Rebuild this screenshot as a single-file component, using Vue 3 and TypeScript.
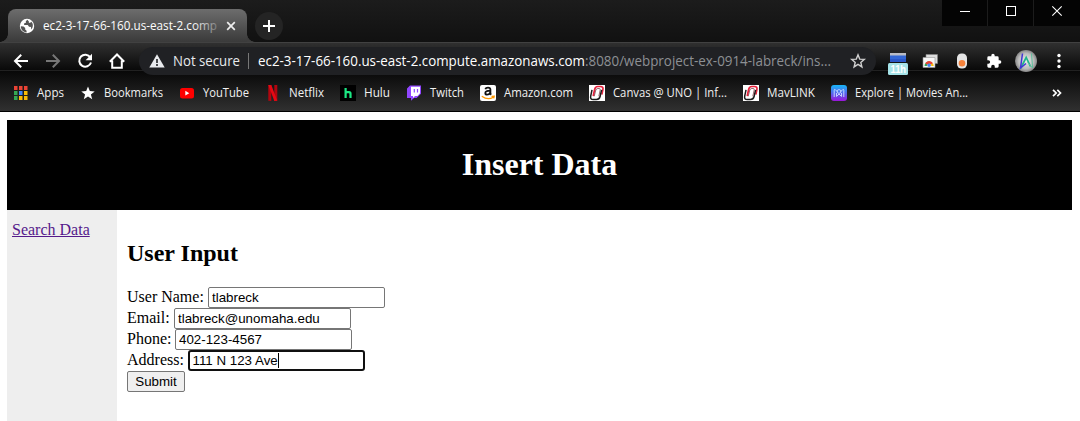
<script setup lang="ts">
import { reactive } from 'vue'

interface Bookmark {
  icon: string
  label: string
  width: number
}

const bookmarks: Bookmark[] = [
  { icon: 'apps', label: 'Apps', width: 27 },
  { icon: 'star', label: 'Bookmarks', width: 59 },
  { icon: 'youtube', label: 'YouTube', width: 46 },
  { icon: 'netflix', label: 'Netflix', width: 35 },
  { icon: 'hulu', label: 'Hulu', width: 26 },
  { icon: 'twitch', label: 'Twitch', width: 34 },
  { icon: 'amazon', label: 'Amazon.com', width: 69 },
  { icon: 'uno', label: 'Canvas @ UNO | Inf...', width: 114 },
  { icon: 'uno', label: 'MavLINK', width: 48 },
  { icon: 'movies', label: 'Explore | Movies An...', width: 113 },
]

const appColors = ['#ea4335', '#ea4335', '#ea4335', '#34a853', '#4285f4', '#fbbc05', '#34a853', '#fbbc05', '#fbbc05']

const form = reactive({
  user: 'tlabreck',
  email: 'tlabreck@unomaha.edu',
  phone: '402-123-4567',
  address: '111 N 123 Ave',
})
</script>

<template>
  <div class="window">
    <div class="titlebar">
      <div class="tab">
        <svg class="globe" width="16" height="16" viewBox="0 0 16 16">
          <circle cx="8" cy="8" r="7.2" fill="#fff" />
          <path d="M1.800 8.200 4.600 8.400 6.200 10v1.600l1.400 1.200v1.600C4.200 14.200 1.800 11.600 1.800 8.200zM8.300 1.800 6.800 3.200 6.900 4.800 5 5.600 5.200 7 8.800 7.100 10 8.800 12 9 12.200 11.500C14.600 9 14.300 5.500 12.200 3.800L11 5 9.700 4.600 9.900 3.400z" fill="#555" />
        </svg>
        <svg class="tab-title" width="175" height="20">
          <defs>
            <linearGradient id="fade" gradientUnits="userSpaceOnUse" x1="0" x2="174" y1="0" y2="0">
              <stop offset="0.86" stop-color="#fff" />
              <stop offset="1" stop-color="#fff" stop-opacity="0.25" />
            </linearGradient>
          </defs>
          <text x="0" y="14" textLength="174" lengthAdjust="spacingAndGlyphs" fill="url(#fade)">ec2-3-17-66-160.us-east-2.comp</text>
        </svg>
        <svg class="tab-close" width="10" height="10" viewBox="0 0 10 10"><path d="M1.200 1.200 8.800 8.800M8.800 1.200 1.200 8.800" stroke="#eee" stroke-width="1.700" /></svg>
      </div>
      <div class="new-tab">
        <svg width="12" height="12" viewBox="0 0 12 12"><path d="M6 0v12M0 6h12" stroke="#fff" stroke-width="2" /></svg>
      </div>
      <div class="controls">
        <div class="control"><svg width="10" height="10"><path d="M0 5.500h10" stroke="#fff" /></svg></div>
        <div class="control"><svg width="10" height="10"><rect x=".5" y=".5" width="9" height="9" fill="none" stroke="#fff" /></svg></div>
        <div class="control"><svg width="10" height="10"><path d="M.3.300 9.700 9.700M9.700.300.300 9.700" stroke="#fff" stroke-width="1.100" /></svg></div>
      </div>
    </div>

    <div class="toolbar">
      <div class="nav">
        <svg width="16" height="16" viewBox="0 0 16 16"><path d="M15 8H2.200M8.200 1.700 2 8l6.200 6.300" fill="none" stroke="#fff" stroke-width="2" /></svg>
        <svg width="16" height="16" viewBox="0 0 16 16"><path d="M1 8h12.800M7.800 1.700 14 8l-6.200 6.300" fill="none" stroke="#777" stroke-width="2" /></svg>
        <svg width="16" height="16" viewBox="0 0 16 16"><path d="M13.300 4.400A6 6 0 1 0 14 9.500" fill="none" stroke="#fff" stroke-width="2" /><path d="M15 .8v6.400H8.600z" fill="#fff" /></svg>
        <svg width="16" height="16" viewBox="0 0 16 16"><path d="M.8 8.700 8 1.500l7.200 7.200M3.200 7.500v7.300h9.600V7.500" fill="none" stroke="#fff" stroke-width="2" /></svg>
      </div>
      <div class="omnibox">
        <svg class="warn" width="16" height="14" viewBox="0 0 16 14"><path d="M8 .3 15.700 13.500H.3z" fill="#e8eaed" /><path d="M8 5v4M8 10v2" stroke="#202124" stroke-width="1.600" /></svg>
        <svg class="secure" width="68" height="20"><text x="0" y="14.500" textLength="67" lengthAdjust="spacingAndGlyphs">Not secure</text></svg>
        <i class="divider"></i>
        <svg class="url" width="575" height="20">
          <text x="0" y="14.500" textLength="327" lengthAdjust="spacingAndGlyphs" fill="#fff">ec2-3-17-66-160.us-east-2.compute.amazonaws.com</text>
          <text x="327" y="14.500" textLength="246" lengthAdjust="spacingAndGlyphs" fill="#8d9094">:8080/webproject-ex-0914-labreck/ins...</text>
        </svg>
        <svg class="fav" width="16" height="16" viewBox="0 0 16 16"><path d="m8 1.800 1.700 4.300 4.600.3-3.500 3 1.100 4.500L8 11.400l-3.900 2.500 1.100-4.500-3.500-3 4.600-.3z" fill="none" stroke="#d0d0d0" stroke-width="1.400" /></svg>
      </div>
      <div class="extensions">
        <svg width="20" height="24" viewBox="0 0 20 24">
          <path d="M2 2h16v9H2z" fill="#3367d6" /><path d="M2 2h16v2.500H2z" fill="#b9bcc5" /><path d="M2 8h16v3H2z" fill="#2a56c6" />
          <rect y="12" width="20" height="12" rx="1.500" fill="#a5e3e8" />
          <text class="badge" x="2.500" y="22" textLength="15.500" lengthAdjust="spacingAndGlyphs">11h</text>
        </svg>
        <svg width="16" height="16" viewBox="0 0 16 16">
          <path d="M4 1.500h11.500v9H4z" fill="#ddd" stroke="#888" stroke-width=".6" /><path d="M1 4.500h12v10H1z" fill="#f7f7f7" stroke="#999" stroke-width=".6" />
          <path d="M2.500 13a4.600 4.600 0 0 1 4.600-4.600v2.300A2.300 2.300 0 0 0 4.800 13z" fill="#34a853" /><path d="M3.200 10.300a4.600 4.600 0 0 1 7.900 0L8.800 11.800a2 2 0 0 0-3.500 0z" fill="#ea4335" /><path d="m11.100 10.300.6 2.700H9.400l-.6-1.500z" fill="#fbbc05" /><circle cx="7.100" cy="12.300" r="1.700" fill="#4285f4" />
        </svg>
        <svg width="12" height="16" viewBox="0 0 12 16"><rect x="1" y=".5" width="10" height="15" rx="4.500" fill="#e5e5e5" /><circle cx="6" cy="10.300" r="3.300" fill="#f5823b" /></svg>
        <svg width="16" height="16" viewBox="0 0 24 24"><path d="M20.500 11H19V7a2 2 0 0 0-2-2h-4V3.500a2.500 2.500 0 0 0-5 0V5H4a2 2 0 0 0-2 2v3.800h1.500a2.700 2.700 0 0 1 0 5.400H2V20a2 2 0 0 0 2 2h3.800v-1.500a2.700 2.700 0 0 1 5.400 0V22H17a2 2 0 0 0 2-2v-4h1.500a2.500 2.500 0 0 0 0-5z" fill="#fff" /></svg>
        <svg width="22" height="22" viewBox="0 0 22 22">
          <defs><radialGradient id="metal"><stop offset="0" stop-color="#eee" /><stop offset=".7" stop-color="#bbb" /><stop offset="1" stop-color="#858585" /></radialGradient></defs>
          <circle cx="11" cy="11" r="11" fill="url(#metal)" />
          <path d="M5.500 18.500 11.200 7.500 15.500 16.500" fill="none" stroke="#20b58a" stroke-width="1.700" /><path d="M7.500 3.500 5.500 18l5.500-4.500" fill="none" stroke="#4335d5" stroke-width="1.500" /><path d="M16.500 3.500 17.600 18l-5-5.500" fill="none" stroke="#5cbf9b" stroke-width="1" />
        </svg>
        <svg width="4" height="16" viewBox="0 0 4 16"><circle cx="2" cy="2.500" r="1.700" fill="#fff" /><circle cx="2" cy="8" r="1.700" fill="#fff" /><circle cx="2" cy="13.500" r="1.700" fill="#fff" /></svg>
      </div>
    </div>

    <div class="bookmarks">
      <div v-for="(b, i) in bookmarks" :key="i" class="bookmark">
        <svg width="16" height="16" viewBox="0 0 16 16">
          <template v-if="b.icon === 'apps'">
            <rect v-for="(c, n) in appColors" :key="n" :x="1 + (n % 3) * 5" :y="1 + Math.floor(n / 3) * 5" width="3.500" height="4" :fill="c" />
          </template>
          <path v-else-if="b.icon === 'star'" d="m8 1.500 1.800 4.600 4.900.3-3.800 3.100 1.300 4.800L8 11.600l-4.200 2.700 1.300-4.800L1.300 6.400l4.900-.3z" fill="#fff" />
          <template v-else-if="b.icon === 'youtube'">
            <rect x="1" y="3" width="14" height="10.500" rx="2.500" fill="#f00" /><path d="m6.300 5.800 4 2.400-4 2.400z" fill="#fff" />
          </template>
          <template v-else-if="b.icon === 'netflix'">
            <path d="M3.300 0h3v16l-3-.3zM9.300 0h3v15.700l-3 .3z" fill="#b1060f" /><path d="M3.300 0h3l6 15.700-3 .3z" fill="#e50914" />
          </template>
          <template v-else-if="b.icon === 'hulu'">
            <rect width="16" height="16" fill="#000" /><path d="M5.600 3v10M5.600 8.500q0-1.300 1.400-1.300h2q1.500 0 1.500 1.500V13" fill="none" stroke="#1ce783" stroke-width="2.200" />
          </template>
          <template v-else-if="b.icon === 'twitch'">
            <path d="M4 .5h11v8.300l-4.300 4.200H8l-3 2.800V13H1V3.500z" fill="#9146ff" /><path d="M5 1.800h9v6.400L11.500 11H9l-2 2v-2H5z" fill="#fff" /><path d="M8.300 4v3.500M11.500 4v3.500" stroke="#9146ff" stroke-width="1.200" />
          </template>
          <template v-else-if="b.icon === 'amazon'">
            <rect width="16" height="16" rx="2" fill="#fff" />
            <path d="M5.300 4.200Q5.800 2.600 8 2.600q2.400 0 2.400 2V8q0 1 .8 1.700M10.200 5.700Q5.300 5.600 5.300 8q0 1.700 1.800 1.700Q9.200 9.600 10.200 7.600" fill="none" stroke="#111" stroke-width="1.800" />
            <path d="M1.800 11.200q6 4.400 11.500 1M11.500 11.300l2.700-.2-.5 2.300" fill="none" stroke="#f90" stroke-width="1.300" />
          </template>
          <template v-else-if="b.icon === 'uno'">
            <rect width="16" height="16" fill="#fff" />
            <path d="M4.200 11 5.600 4.600Q6.300 1.500 8.800 1.500h2.600q3.200 0 2.500 3L12.800 9.500" fill="none" stroke="#e8213c" stroke-width="1.700" />
            <path d="M3 4.800 1.700 11.200Q1 14.500 4.200 14.500h3.200q3 0 3.700-3L12.600 4.800" fill="none" stroke="#1b1b1b" stroke-width="1.500" />
            <path d="M5.200 11.300 6.800 5Q7.300 3.500 8.800 3.500H10.300Q11.500 3.500 11.200 5L9.800 11.300" fill="none" stroke="#6a2630" stroke-width=".7" />
          </template>
          <template v-else>
            <defs><linearGradient id="violet" x2="0" y2="1"><stop stop-color="#16b7f8" /><stop offset=".5" stop-color="#5468ed" /><stop offset="1" stop-color="#9b16d9" /></linearGradient></defs>
            <rect width="16" height="16" rx="3" fill="url(#violet)" />
            <path d="M3.200 12V5.200Q3.200 3.800 4.400 4.700L7 7.300M12.800 12V5.200q0-1.400-1.200-.5L9 7.300M5.500 11.500V8M10.500 11.500V8M5.500 11.500 8 9l2.500 2.500" fill="none" stroke="#c3d2ff" stroke-width="1" />
            <circle cx="8" cy="6.500" r="1.900" fill="none" stroke="#c3d2ff" stroke-width=".9" />
          </template>
        </svg>
        <svg class="label" :width="b.width" height="18"><text x="0" y="13" :textLength="b.width" lengthAdjust="spacingAndGlyphs">{{ b.label }}</text></svg>
      </div>
      <svg class="more" width="10" height="8" viewBox="0 0 10 8"><path d="m1 .8 3.200 3.200L1 7.200M5.300.8l3.200 3.200-3.200 3.200" fill="none" stroke="#fff" stroke-width="1.700" /></svg>
    </div>

    <main class="page">
      <header class="banner"><h1>Insert Data</h1></header>
      <div class="body">
        <aside><a href="#">Search Data</a></aside>
        <section>
          <h2>User Input</h2>
          <form @submit.prevent>
            <label class="row"><span class="name user">User Name:</span><input v-model="form.user" type="text" /></label>
            <label class="row"><span class="name email">Email:</span><input v-model="form.email" type="text" /></label>
            <label class="row"><span class="name phone">Phone:</span><input v-model="form.phone" type="text" /></label>
            <label class="row"><span class="name address">Address:</span><span class="focused">{{ form.address }}<i class="caret"></i></span></label>
            <button type="submit">Submit</button>
          </form>
        </section>
      </div>
    </main>
  </div>
</template>

<style>
body {
  margin: 0;
  overflow: hidden;
  background: #fff;
}
</style>

<style scoped>
.window {
  width: 1080px;
  height: 421px;
  overflow: hidden;
  background: #fff;
  font-family: 'Liberation Serif', serif;
}
svg {
  display: block;
  flex: none;
  overflow: visible;
}
svg text {
  font-family: 'Open Sans', 'Noto Sans', sans-serif;
}
.titlebar {
  height: 42px;
  display: flex;
  background: linear-gradient(#1c1c1c, #111);
}
.tab {
  position: relative;
  box-sizing: border-box;
  width: 239px;
  height: 33px;
  margin: 9px 0 0 8px;
  padding: 1px 10px 0 12px;
  display: flex;
  align-items: center;
  border-radius: 8px 8px 0 0;
  background: linear-gradient(#6d6d6d, #3a3a3a);
}
.tab::before,
.tab::after {
  content: '';
  position: absolute;
  bottom: 0;
  width: 8px;
  height: 8px;
}
.tab::before {
  left: -8px;
  background: radial-gradient(circle at 0 0, transparent 7.5px, #3d3d3d 8px);
}
.tab::after {
  right: -8px;
  background: radial-gradient(circle at 100% 0, transparent 7.5px, #3d3d3d 8px);
}
.globe {
  margin-left: -1px;
}
.tab-title {
  margin-left: 8px;
}
.tab-title text {
  font-size: 12px;
}
.tab-close {
  margin-left: 8px;
}
.new-tab {
  width: 28px;
  height: 28px;
  margin: 12px 0 0 8px;
  border-radius: 50%;
  background: #242424;
  display: flex;
  align-items: center;
  justify-content: center;
}
.controls {
  display: flex;
  gap: 1px;
  margin-left: auto;
  height: 26px;
  background: #1c1c1c;
}
.control {
  width: 45px;
  height: 26px;
  background: #040404;
  display: flex;
  justify-content: center;
  padding-top: 6px;
  box-sizing: border-box;
}
.control:last-child {
  width: 46px;
}
.toolbar {
  position: relative;
  z-index: 1;
  height: 29px;
  box-sizing: border-box;
  border-top: 1px solid #414141;
  border-bottom: 1px solid #212121;
  background: linear-gradient(#303030, #090909);
  display: flex;
  align-items: center;
}
.nav {
  display: flex;
  gap: 16px;
  margin: 9px 0 0 13px;
}
.omnibox {
  box-sizing: border-box;
  width: 737px;
  height: 28px;
  margin: 9px 0 0 14px;
  padding-left: 10px;
  border-radius: 14px;
  background: #202124;
  display: flex;
  align-items: center;
  flex: none;
}
.secure {
  margin-left: 8px;
  fill: #e8eaed;
}
.secure text,
.url text {
  font-size: 14px;
}
.divider {
  width: 1px;
  height: 16px;
  margin: 0 9px 0 7px;
  background: #777;
}
.fav {
  margin-left: 17px;
}
.extensions {
  display: flex;
  align-items: center;
  margin: 9px 0 0 12px;
}
.extensions > svg:nth-child(1) {
  margin-top: 4px;
}
.extensions > svg:nth-child(2) {
  margin-left: 14px;
}
.extensions > svg:nth-child(3) {
  margin-left: 18px;
}
.extensions > svg:nth-child(4) {
  margin-left: 18px;
}
.extensions > svg:nth-child(5) {
  margin-left: 13px;
}
.extensions > svg:nth-child(6) {
  margin-left: 20px;
}
svg .badge {
  font-family: 'Liberation Sans', Arial, sans-serif;
  font-size: 11px;
  font-weight: 700;
  fill: #fff;
}
.bookmarks {
  height: 41px;
  box-sizing: border-box;
  border-bottom: 1px solid #000;
  padding: 4px 18px 0 13px;
  display: flex;
  align-items: center;
  gap: 16px;
  background: linear-gradient(#080808, #303030);
}
.bookmark {
  display: flex;
  align-items: center;
  gap: 8px;
}
.label {
  fill: #f1f1f1;
}
.label text {
  font-size: 12px;
}
.more {
  margin-left: auto;
}
.page {
  padding: 8px 8px 0 7px;
}
.banner {
  box-sizing: border-box;
  height: 90px;
  padding-bottom: 2px;
  background: #000;
  color: #fff;
  display: flex;
  align-items: center;
  justify-content: center;
}
h1 {
  margin: 0;
  font-size: 32px;
  line-height: 36px;
}
.body {
  height: 211px;
  display: flex;
}
aside {
  box-sizing: border-box;
  width: 110px;
  padding: 11px 5px;
  background: #eee;
  font-size: 16px;
  line-height: 18px;
}
aside a {
  color: #551a8b;
}
section {
  padding: 30px 10px;
}
h2 {
  margin: 0 0 20px;
  font-size: 24px;
  line-height: 27px;
}
.row {
  display: flex;
  height: 21px;
  font-size: 16px;
  line-height: 20px;
}
.name {
  flex: none;
  white-space: nowrap;
}
.user {
  width: 81px;
}
.email {
  width: 47px;
}
.phone {
  width: 48px;
}
.address {
  width: 61px;
}
input,
.focused {
  box-sizing: border-box;
  width: 177px;
  height: 21px;
  margin: 0;
  padding: 1px 2px 1px 3px;
  border: 1px solid #767676;
  border-radius: 2px;
  background: #fff;
  color: #000;
  font: 13.333px 'Liberation Sans', Arial, sans-serif;
}
.focused {
  display: flex;
  align-items: center;
  padding-left: 2.5px;
  border: 2px solid #101010;
  border-radius: 3px;
}
.caret {
  width: 1px;
  height: 15px;
  background: #000;
}
button {
  display: block;
  box-sizing: border-box;
  width: 58px;
  height: 21px;
  margin: 0;
  padding: 0;
  border: 1px solid #767676;
  border-radius: 2px;
  background: #efefef;
  color: #000;
  font: 13.333px 'Liberation Sans', Arial, sans-serif;
}
</style>
